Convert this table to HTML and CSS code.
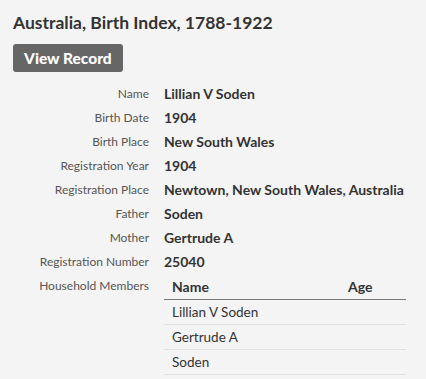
FILE: index.html
```html
<!DOCTYPE html>
<html>
<head>
<meta charset="utf-8">
<link rel="stylesheet" href="styles.css">
</head>
<body>
<div class="page">
  <h1 class="title">Australia, Birth Index, 1788-1922</h1>
  <a class="btn">View Record</a>
  <dl class="facts">
    <dt>Name</dt><dd>Lillian V Soden</dd>
    <dt>Birth Date</dt><dd>1904</dd>
    <dt>Birth Place</dt><dd>New South Wales</dd>
    <dt>Registration Year</dt><dd>1904</dd>
    <dt>Registration Place</dt><dd>Newtown, New South Wales, Australia</dd>
    <dt>Father</dt><dd>Soden</dd>
    <dt>Mother</dt><dd>Gertrude A</dd>
    <dt>Registration Number</dt><dd>25040</dd>
    <dt class="hh-label">Household Members</dt>
    <dd class="hh">
      <table class="members">
        <thead><tr><th class="c-name">Name</th><th class="c-age">Age</th></tr></thead>
        <tbody>
          <tr><td>Lillian V Soden</td><td></td></tr>
          <tr><td>Gertrude A</td><td></td></tr>
          <tr><td>Soden</td><td></td></tr>
        </tbody>
      </table>
    </dd>
  </dl>
</div>
</body>
</html>
```
FILE: styles.css
```css
html, body {
  margin: 0;
  padding: 0;
  background: #f4f4f4;
}
body {
  font-family: Lato, "Open Sans", sans-serif;
  color: #333;
}
.page {
  padding: 12px 13px 0 13px;
}
.title {
  margin: 0;
  font-size: 17.5px;
  font-weight: 700;
  line-height: 22px;
  color: #333;
}
.btn {
  display: inline-block;
  margin-top: 10px;
  height: 28px;
  line-height: 28px;
  padding: 0 0 0 11px;
  width: 110px;
  box-sizing: border-box;
  background: #666;
  color: #fff;
  font-weight: 900;
  font-size: 15.5px;
  border-radius: 3px;
}
.facts {
  margin: 10px 0 0 0;
  display: grid;
  grid-template-columns: 136px 1fr;
  column-gap: 15px;
}
.facts dt {
  text-align: right;
  font-size: 12px;
  color: #555;
  line-height: 24px;
}
.facts dd {
  margin: 0;
  font-size: 14px;
  font-weight: 700;
  color: #333;
  line-height: 24px;
}
.members {
  width: 242px;
  border-collapse: collapse;
}
.members th {
  text-align: left;
  font-size: 14px;
  font-weight: 700;
  line-height: 24px;
  padding: 1px 8px 0 8px;
  border-bottom: 1px solid #777;
}
.members .c-age {
  width: 50px;
}
.members td {
  font-size: 13.5px;
  font-weight: 400;
  line-height: 24px;
  padding: 0 8px;
  border-bottom: 1px solid #e2e2e2;
}
```
